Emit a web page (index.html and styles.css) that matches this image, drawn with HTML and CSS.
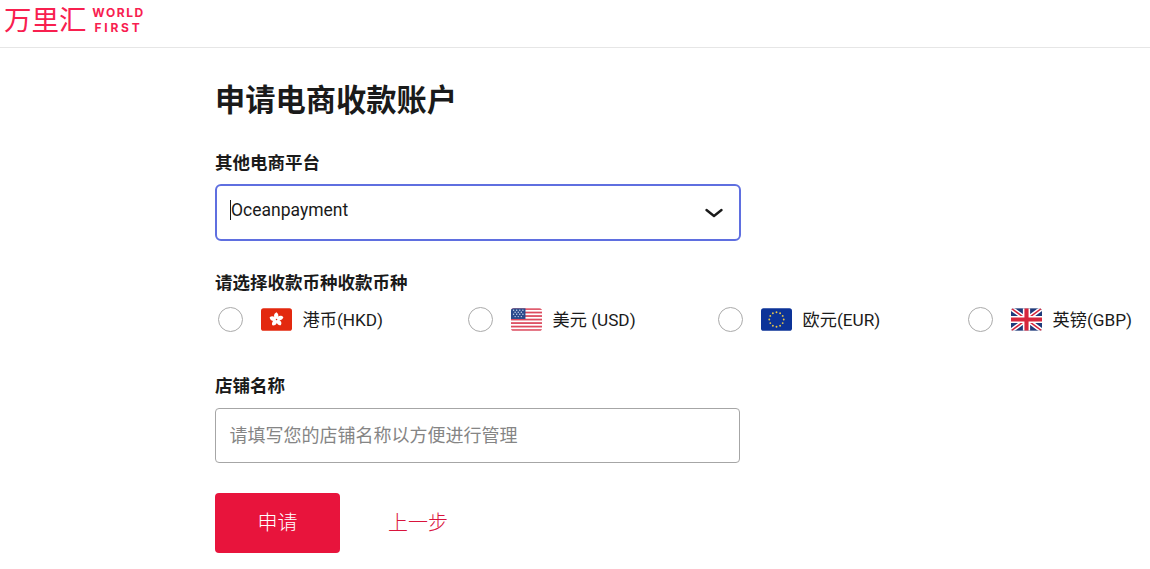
FILE: index.html
```html
<!DOCTYPE html>
<html lang="zh-CN">
<head>
<meta charset="utf-8">
<title>申请电商收款账户</title>
<link rel="stylesheet" href="styles.css">
</head>
<body>
<header class="topbar">
  <div class="logo">
    <span class="logo-cn">万里汇</span>
    <span class="logo-en"><span>WORLD</span><span class="logo-first">FIRST</span></span>
  </div>
</header>
<main class="content">
  <h1 class="title">申请电商收款账户</h1>
  <label class="label label-platform">其他电商平台</label>
  <div class="select">
    <span class="caret"></span><span class="select-value">Oceanpayment</span>
    <svg class="chevron" width="20" height="12" viewBox="0 0 20 12"><path d="M2.5 3 L10 9 L17.5 3" fill="none" stroke="#1a1a1a" stroke-width="2.4" stroke-linecap="round" stroke-linejoin="round"/></svg>
  </div>
  <label class="label label-currency">请选择收款币种收款币种</label>
  <div class="currencies">
    <div class="option">
      <span class="radio"></span>
      <svg class="flag" viewBox="0 0 30 22"><rect width="30" height="22" rx="2.5" fill="#e3290f"/><g fill="#fff"><path d="M15 11 C11.8 9.5 11.8 5.4 15 4 C17.2 5.6 17.6 8.6 15 11 Z"/><path d="M15 11 C11.8 9.5 11.8 5.4 15 4 C17.2 5.6 17.6 8.6 15 11 Z" transform="rotate(72 15 11)"/><path d="M15 11 C11.8 9.5 11.8 5.4 15 4 C17.2 5.6 17.6 8.6 15 11 Z" transform="rotate(144 15 11)"/><path d="M15 11 C11.8 9.5 11.8 5.4 15 4 C17.2 5.6 17.6 8.6 15 11 Z" transform="rotate(216 15 11)"/><path d="M15 11 C11.8 9.5 11.8 5.4 15 4 C17.2 5.6 17.6 8.6 15 11 Z" transform="rotate(288 15 11)"/></g><circle cx="15" cy="11" r=".7" fill="#e3290f"/></svg>
      <span class="option-text">港币(HKD)</span>
    </div>
    <div class="option">
      <span class="radio"></span>
      <svg class="flag" viewBox="0 0 30 22"><defs><clipPath id="c1"><rect width="30" height="22" rx="2.5"/></clipPath></defs><g clip-path="url(#c1)"><rect width="30" height="22" fill="#fff"/><g fill="#dc4a5e"><rect y="0" width="30" height="1.7"/><rect y="3.4" width="30" height="1.7"/><rect y="6.8" width="30" height="1.7"/><rect y="10.2" width="30" height="1.7"/><rect y="13.6" width="30" height="1.7"/><rect y="17" width="30" height="1.7"/><rect y="20.4" width="30" height="1.7"/></g><rect width="14" height="10.5" fill="#2a4a8c"/><g fill="#c9d4ea"><circle cx="2.5" cy="2" r=".7"/><circle cx="5.5" cy="2" r=".7"/><circle cx="8.5" cy="2" r=".7"/><circle cx="11.5" cy="2" r=".7"/><circle cx="4" cy="4" r=".7"/><circle cx="7" cy="4" r=".7"/><circle cx="10" cy="4" r=".7"/><circle cx="2.5" cy="6" r=".7"/><circle cx="5.5" cy="6" r=".7"/><circle cx="8.5" cy="6" r=".7"/><circle cx="11.5" cy="6" r=".7"/><circle cx="4" cy="8.2" r=".7"/><circle cx="7" cy="8.2" r=".7"/><circle cx="10" cy="8.2" r=".7"/></g></g></svg>
      <span class="option-text">美元 (USD)</span>
    </div>
    <div class="option">
      <span class="radio"></span>
      <svg class="flag" viewBox="0 0 30 22"><rect width="30" height="22" rx="2.5" fill="#0c3398"/><g fill="#e8c84a"><circle cx="15" cy="4" r=".9"/><circle cx="18.5" cy="5" r=".9"/><circle cx="21" cy="7.5" r=".9"/><circle cx="22" cy="11" r=".9"/><circle cx="21" cy="14.5" r=".9"/><circle cx="18.5" cy="17" r=".9"/><circle cx="15" cy="18" r=".9"/><circle cx="11.5" cy="17" r=".9"/><circle cx="9" cy="14.5" r=".9"/><circle cx="8" cy="11" r=".9"/><circle cx="9" cy="7.5" r=".9"/><circle cx="11.5" cy="5" r=".9"/></g></svg>
      <span class="option-text">欧元(EUR)</span>
    </div>
    <div class="option">
      <span class="radio"></span>
      <svg class="flag" viewBox="0 0 30 22"><defs><clipPath id="c2"><rect width="30" height="22" rx="2.5"/></clipPath></defs><g clip-path="url(#c2)"><rect width="30" height="22" fill="#1f3a7a"/><path d="M0 0 L30 22 M30 0 L0 22" stroke="#fff" stroke-width="4.4"/><path d="M0 0 L30 22 M30 0 L0 22" stroke="#d6263c" stroke-width="1.5"/><path d="M15 0 V22 M0 11 H30" stroke="#fff" stroke-width="7"/><path d="M15 0 V22 M0 11 H30" stroke="#d6263c" stroke-width="4"/></g></svg>
      <span class="option-text">英镑(GBP)</span>
    </div>
  </div>
  <label class="label label-store">店铺名称</label>
  <div class="input"><span class="placeholder">请填写您的店铺名称以方便进行管理</span></div>
  <div class="actions">
    <button class="submit" type="button">申请</button>
    <a class="back">上一步</a>
  </div>
</main>
</body>
</html>
```
FILE: styles.css
```css
* { box-sizing: border-box; }
html, body { margin: 0; padding: 0; }
body {
  width: 1150px;
  height: 569px;
  overflow: hidden;
  background: #fff;
  color: #1a1a1a;
  font-family: Roboto, "Noto Sans CJK SC", sans-serif;
}
.topbar {
  height: 48px;
  border-bottom: 1px solid #e6e6e6;
  padding: 3px 0 0 4px;
}
.logo { display: flex; align-items: flex-start; color: #f8204f; }
.logo-cn {
  font-family: Roboto, "Noto Sans CJK SC", sans-serif;
  font-size: 27.5px;
  line-height: 29px;
  font-weight: 400;
  width: 89px;
  padding-top: 3px;
}
.logo-en {
  display: flex;
  flex-direction: column;
  align-items: center;
  width: 51px;
  font-family: Inter, sans-serif;
  font-size: 12px;
  font-weight: 700;
  letter-spacing: 1.6px;
  line-height: 15px;
  padding-top: 2px;
}
.logo-first { letter-spacing: 2.8px; }
.content { padding-left: 215px; }
.title {
  margin: 0;
  padding-top: 29px;
  font-size: 30.25px;
  line-height: 42px;
  font-weight: 700;
  font-family: "Noto Sans CJK SC", sans-serif;
}
.label {
  display: block;
  font-family: "Noto Sans CJK SC", sans-serif;
  font-size: 17.5px;
  font-weight: 700;
  line-height: 24px;
}
.label-platform { margin-top: 31px; }
.select {
  display: flex;
  align-items: center;
  width: 526px;
  height: 57px;
  margin-top: 10px;
  padding: 0 15px 0 13px;
  border: 2px solid #5f6fe0;
  border-radius: 6px;
  font-size: 17.5px;
}
.caret { width: 1px; height: 20px; background: #1a1a1a; margin-bottom: 6px; }
.select-value { flex: 1; padding-bottom: 6px; }
.chevron { display: block; }
.label-currency { margin-top: 29px; }
.currencies {
  display: grid;
  grid-template-columns: repeat(3, 250px) auto;
  width: 935px;
  margin-top: 12px;
  padding-left: 3px;
}
.option { display: flex; align-items: center; height: 26px; }
.radio {
  width: 25px;
  height: 25px;
  border: 1px solid #aaa;
  border-radius: 50%;
  flex: none;
}
.flag { width: 31px; height: 23px; margin-left: 18px; flex: none; }
.option-text { margin-left: 10.5px; padding-bottom: 2px; font-size: 17.2px; white-space: nowrap; }
.label-store { margin-top: 41px; }
.input {
  display: flex;
  align-items: center;
  width: 525px;
  height: 55px;
  margin-top: 11px;
  padding: 0 0 3px 13.5px;
  border: 1px solid #a6a6a6;
  border-radius: 4px;
}
.placeholder { font-size: 18px; color: #858585; font-family: "Noto Sans CJK SC", sans-serif; font-weight: 400; }
.actions { display: flex; align-items: center; margin-top: 30px; }
.submit {
  width: 125px;
  height: 60px;
  border: 0;
  border-radius: 4px;
  background: #e8143c;
  color: #fff;
  font-family: "Noto Sans CJK SC", sans-serif;
  font-size: 20px;
  font-weight: 300;
  padding: 0 0 4px;
}
.back {
  margin-left: 48px;
  padding-bottom: 4px;
  color: #d9143c;
  font-family: "Noto Sans CJK SC", sans-serif;
  font-size: 20px;
  font-weight: 300;
}
```
